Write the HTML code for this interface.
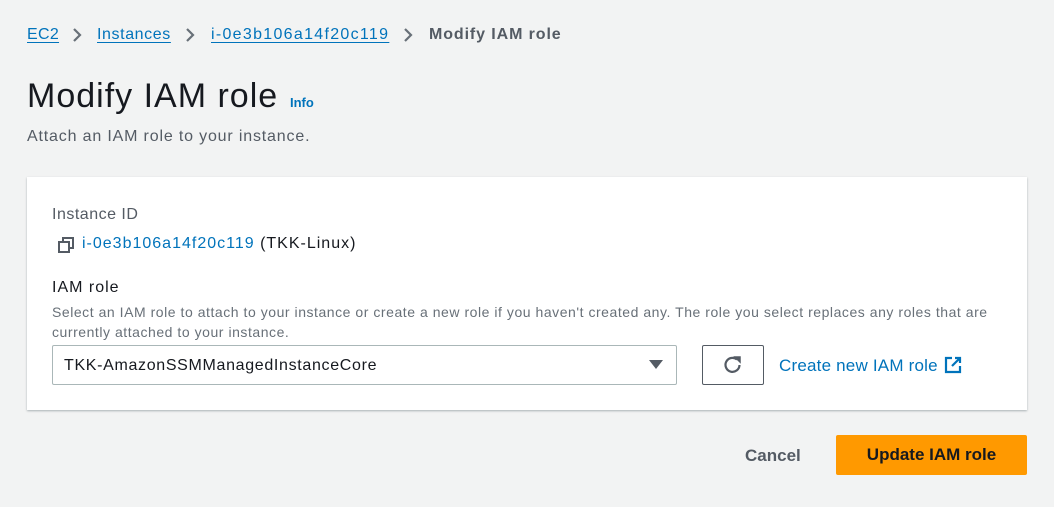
<!DOCTYPE html>
<html><head><style>
*{margin:0;padding:0;box-sizing:border-box}
body{width:1054px;height:507px;background:#f2f3f3;font-family:"Liberation Sans",sans-serif;color:#16191f;position:relative;overflow:hidden}
.a{position:absolute;white-space:nowrap}
.lnk{color:#0073bb}
.u{text-decoration:underline;text-underline-offset:3px}
</style></head><body>
<div class="a lnk u" style="left:27px;top:26px;font-size:16px;letter-spacing:0.3px">EC2</div>
<div class="a lnk u" style="left:97px;top:26px;font-size:16px;letter-spacing:0.6px">Instances</div>
<div class="a lnk u" style="left:211px;top:26px;font-size:16px;letter-spacing:1.3px">i-0e3b106a14f20c119</div>
<div class="a" style="left:429px;top:26px;font-size:16px;letter-spacing:0.9px;color:#545b64;font-weight:bold">Modify IAM role</div>
<svg class="a" style="left:71px;top:27px" width="12" height="16" viewBox="0 0 12 16"><path d="M3 2l6 6-6 6" fill="none" stroke="#687078" stroke-width="2.2"/></svg>
<svg class="a" style="left:184px;top:27px" width="12" height="16" viewBox="0 0 12 16"><path d="M3 2l6 6-6 6" fill="none" stroke="#687078" stroke-width="2.2"/></svg>
<svg class="a" style="left:402px;top:27px" width="12" height="16" viewBox="0 0 12 16"><path d="M3 2l6 6-6 6" fill="none" stroke="#687078" stroke-width="2.2"/></svg>
<div class="a" style="left:27px;top:77px;font-size:34px;letter-spacing:1px">Modify IAM role</div>
<div class="a lnk" style="left:290px;top:95px;font-size:13px;font-weight:bold">Info</div>
<div class="a" style="left:27px;top:128px;font-size:16px;letter-spacing:0.83px;color:#545b64">Attach an IAM role to your instance.</div>
<div class="a" style="left:27px;top:177px;width:1000px;height:233px;background:#fff;box-shadow:0 1px 2px rgba(0,28,36,.3)"></div>
<div class="a" style="left:52px;top:206px;font-size:16px;letter-spacing:0.5px;color:#545b64">Instance ID</div>
<svg class="a" style="left:57px;top:236px" width="18" height="18" viewBox="0 0 18 18"><rect x="2" y="6" width="10" height="10" fill="none" stroke="#545b64" stroke-width="2"/><path d="M6 6V2h10v10h-4" fill="none" stroke="#545b64" stroke-width="2"/></svg>
<div class="a" style="left:82px;top:235px;font-size:16px;letter-spacing:1px"><span class="lnk">i-0e3b106a14f20c119</span> (TKK-Linux)</div>
<div class="a" style="left:52px;top:279px;font-size:16px;letter-spacing:1px">IAM role</div>
<div class="a" style="left:52px;top:302px;font-size:14px;letter-spacing:0.54px;color:#687078;line-height:20px">Select an IAM role to attach to your instance or create a new role if you haven't created any. The role you select replaces any roles that are<br>currently attached to your instance.</div>
<div class="a" style="left:52px;top:345px;width:625px;height:40px;border:1px solid #aab7b8;border-radius:2px;font-size:16px;letter-spacing:0.67px;padding:11px 0 0 11px">TKK-AmazonSSMManagedInstanceCore</div>
<div class="a" style="left:649px;top:360px;width:0;height:0;border-left:7px solid transparent;border-right:7px solid transparent;border-top:9px solid #545b64"></div>
<div class="a" style="left:702px;top:345px;width:62px;height:40px;border:1px solid #545b64;border-radius:2px"></div>
<svg class="a" style="left:722px;top:354px" width="22" height="22" viewBox="0 0 22 22"><path d="M17.5 11A7 7 0 1 1 15 5.5" fill="none" stroke="#545b64" stroke-width="2.2"/><path d="M13 3h5v5z" fill="#545b64" stroke="#545b64" stroke-width="1.5"/></svg>
<div class="a lnk" style="left:779px;top:356px;font-size:17px;letter-spacing:0.2px">Create new IAM role</div>
<svg class="a" style="left:944px;top:356px" width="18" height="18" viewBox="0 0 18 18"><path d="M8 2H2v14h14v-6" fill="none" stroke="#0073bb" stroke-width="2.2"/><path d="M8 10L16 2M11 2h5v5" fill="none" stroke="#0073bb" stroke-width="2.2"/></svg>
<div class="a" style="left:745px;top:446px;font-size:17px;font-weight:bold;color:#545b64">Cancel</div>
<div class="a" style="left:836px;top:435px;width:191px;height:40px;background:#ff9900;border-radius:2px;font-size:17px;font-weight:bold;text-align:center;line-height:40px">Update IAM role</div>
</body></html>
